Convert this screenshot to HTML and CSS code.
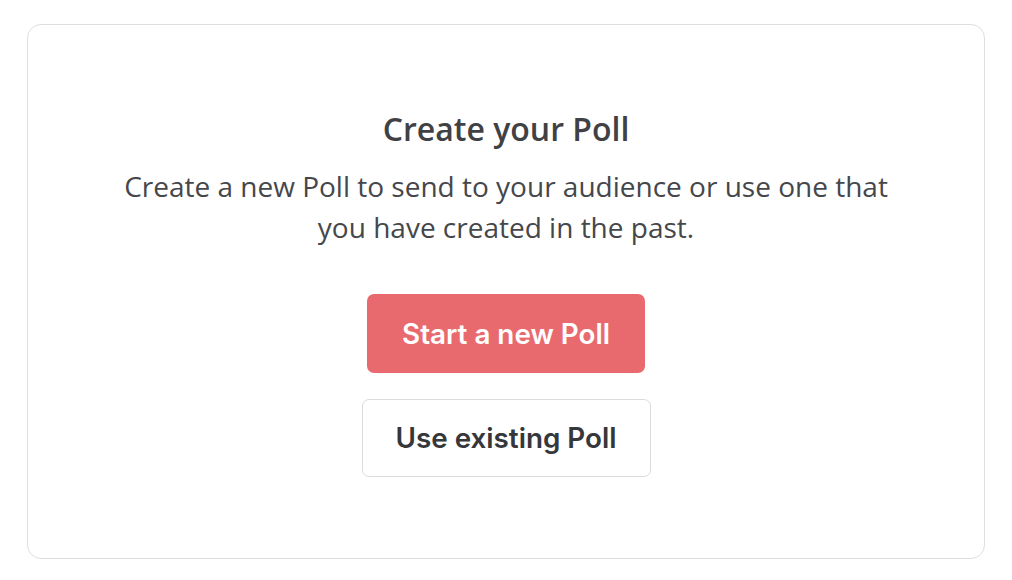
FILE: index.html
```html
<!DOCTYPE html>
<html>
  <head>
    <meta charset="utf-8">
    <title>Create your Poll</title>
    <link rel="stylesheet" href="styles.css">
  </head>
  <body>
    <div class="card">
      <h2 class="card-title">Create your Poll</h2>
      <p class="card-text">
        Create a new Poll to send to your audience or use one that<br>
        you have created in the past.
      </p>
      <div class="actions">
        <button class="btn btn-primary">Start a new Poll</button>
        <button class="btn btn-secondary">Use existing Poll</button>
      </div>
    </div>
  </body>
</html>
```

FILE: styles.css
```css
body {
  margin: 0;
  padding: 24px 27px 21px;
  background-color: white;
  font-family: "Open Sans", "Liberation Sans", sans-serif;
  color: #3f4145;
}
.card {
  box-sizing: border-box;
  height: 535px;
  border: 1.5px solid #dedede;
  border-radius: 14px;
  padding-top: 84px;
  text-align: center;
}
.card-title {
  margin: 0;
  font-size: 32px;
  font-weight: 600;
  line-height: 40px;
}
.card-text {
  margin: 17px 0 0;
  font-size: 28px;
  line-height: 41px;
  color: #45474b;
}
.actions {
  margin-top: 46px;
  display: flex;
  flex-direction: column;
  align-items: center;
  gap: 26px;
}
.btn {
  font-family: Inter, "Liberation Sans", sans-serif;
  font-size: 27.8px;
  font-weight: 600;
  border-radius: 7px;
  cursor: pointer;
}
.btn-primary {
  width: 278px;
  height: 79px;
  border: none;
  background-color: #e96a6e;
  color: white;
}
.btn-secondary {
  width: 289px;
  height: 78px;
  border: 1.5px solid #dcdcdc;
  background-color: white;
  color: #35373b;
}
```
